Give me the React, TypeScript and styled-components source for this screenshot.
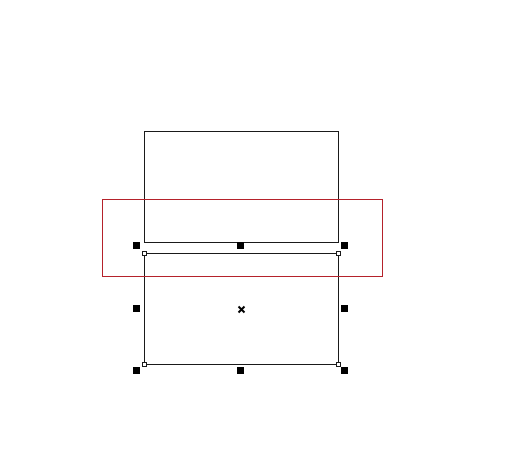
import React from "react"
import styled, { createGlobalStyle } from "styled-components"

const GlobalStyle = createGlobalStyle`
  html, body {
    margin: 0;
    padding: 0;
    background: #ffffff;
  }
`

interface BoxProps {
  x: number
  y: number
  w: number
  h: number
}

const Canvas = styled.div`
  position: relative;
  width: 507px;
  height: 463px;
  background: #ffffff;
  overflow: hidden;
`

const Shape = styled.div<BoxProps>`
  position: absolute;
  box-sizing: border-box;
  left: ${p => p.x}px;
  top: ${p => p.y}px;
  width: ${p => p.w}px;
  height: ${p => p.h}px;
  border: 1px solid #1a1a1a;
`

const Marquee = styled(Shape)`
  border-color: #b5222b;
`

interface PointProps {
  x: number
  y: number
}

const Handle = styled.div<PointProps>`
  position: absolute;
  left: ${p => p.x}px;
  top: ${p => p.y}px;
  width: 7px;
  height: 7px;
  background: #000000;
`

const CornerMark = styled.div<PointProps>`
  position: absolute;
  box-sizing: border-box;
  left: ${p => p.x - 2}px;
  top: ${p => p.y - 2}px;
  width: 5px;
  height: 5px;
  border: 1px solid #1a1a1a;
  background: #ffffff;
`

const CenterMark = styled.svg<PointProps>`
  position: absolute;
  left: ${p => p.x}px;
  top: ${p => p.y}px;
`

const handles: PointProps[] = [
  { x: 133, y: 242 },
  { x: 237, y: 242 },
  { x: 341, y: 242 },
  { x: 133, y: 305 },
  { x: 341, y: 305 },
  { x: 133, y: 367 },
  { x: 237, y: 367 },
  { x: 341, y: 367 },
]

const corners: PointProps[] = [
  { x: 144, y: 253 },
  { x: 338, y: 253 },
  { x: 144, y: 364 },
  { x: 338, y: 364 },
]

export default function App() {
  return (
    <>
      <GlobalStyle />
      <Canvas>
        <Shape x={144} y={131} w={195} h={112} />
        <Shape x={144} y={253} w={195} h={112} />
        <Marquee x={102} y={199} w={281} h={78} />
        {handles.map((h, i) => (
          <Handle key={i} x={h.x} y={h.y} />
        ))}
        {corners.map((c, i) => (
          <CornerMark key={i} x={c.x} y={c.y} />
        ))}
        <CenterMark x={237} y={305} width={9} height={9} viewBox="0 0 9 9">
          <path d="M1.5 1.5 L7.5 7.5 M7.5 1.5 L1.5 7.5" stroke="#000" strokeWidth={2} />
        </CenterMark>
      </Canvas>
    </>
  )
}
